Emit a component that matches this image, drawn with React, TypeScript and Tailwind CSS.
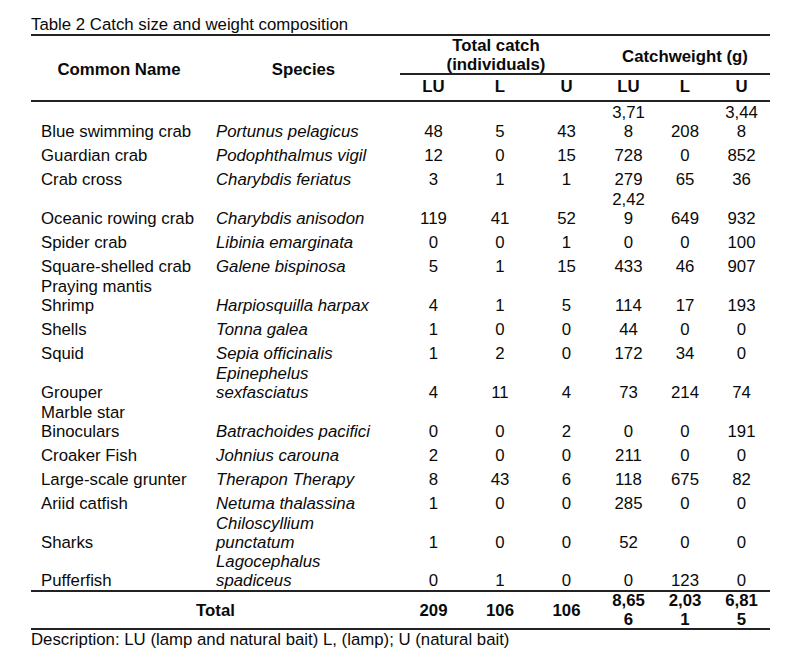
const ROWS: { name: string[]; species: string[]; v: string[][]; h: number }[] = [
  { name: ["Blue swimming crab"], species: ["Portunus pelagicus"], v: [["48"], ["5"], ["43"], ["3,71", "8"], ["208"], ["3,44", "8"]], h: 39 },
  { name: ["Guardian crab"], species: ["Podophthalmus vigil"], v: [["12"], ["0"], ["15"], ["728"], ["0"], ["852"]], h: 24 },
  { name: ["Crab cross"], species: ["Charybdis feriatus"], v: [["3"], ["1"], ["1"], ["279"], ["65"], ["36"]], h: 24 },
  { name: ["Oceanic rowing crab"], species: ["Charybdis anisodon"], v: [["119"], ["41"], ["52"], ["2,42", "9"], ["649"], ["932"]], h: 39 },
  { name: ["Spider crab"], species: ["Libinia emarginata"], v: [["0"], ["0"], ["1"], ["0"], ["0"], ["100"]], h: 24 },
  { name: ["Square-shelled crab"], species: ["Galene bispinosa"], v: [["5"], ["1"], ["15"], ["433"], ["46"], ["907"]], h: 24 },
  { name: ["Praying mantis", "Shrimp"], species: ["Harpiosquilla harpax"], v: [["4"], ["1"], ["5"], ["114"], ["17"], ["193"]], h: 39 },
  { name: ["Shells"], species: ["Tonna galea"], v: [["1"], ["0"], ["0"], ["44"], ["0"], ["0"]], h: 24 },
  { name: ["Squid"], species: ["Sepia officinalis"], v: [["1"], ["2"], ["0"], ["172"], ["34"], ["0"]], h: 24 },
  { name: ["Grouper"], species: ["Epinephelus", "sexfasciatus"], v: [["4"], ["11"], ["4"], ["73"], ["214"], ["74"]], h: 39 },
  { name: ["Marble star", "Binoculars"], species: ["Batrachoides pacifici"], v: [["0"], ["0"], ["2"], ["0"], ["0"], ["191"]], h: 39 },
  { name: ["Croaker Fish"], species: ["Johnius carouna"], v: [["2"], ["0"], ["0"], ["211"], ["0"], ["0"]], h: 24 },
  { name: ["Large-scale grunter"], species: ["Therapon Therapy"], v: [["8"], ["43"], ["6"], ["118"], ["675"], ["82"]], h: 24 },
  { name: ["Ariid catfish"], species: ["Netuma thalassina"], v: [["1"], ["0"], ["0"], ["285"], ["0"], ["0"]], h: 24 },
  { name: ["Sharks"], species: ["Chiloscyllium", "punctatum"], v: [["1"], ["0"], ["0"], ["52"], ["0"], ["0"]], h: 39 },
  { name: ["Pufferfish"], species: ["Lagocephalus", "spadiceus"], v: [["0"], ["1"], ["0"], ["0"], ["123"], ["0"]], h: 38 },
];

const NUM_W = ["w-[67px]", "w-[66px]", "w-[67px]", "w-[57px]", "w-[56px]", "w-[57px]"];

function Lines({ lines }: { lines: string[] }) {
  return (
    <>
      {lines.map((l, i) => (
        <div key={i}>{l}</div>
      ))}
    </>
  );
}

export default function App() {
  return (
    <div className="min-h-screen bg-white pl-[31px] pt-[15px] font-['Liberation_Sans',Arial,sans-serif] text-[16.8px] leading-[19px] text-[#0a0a0a]">
      <div className="h-[19px] whitespace-nowrap">Table 2 Catch size and weight composition</div>

      <div className="w-[739px] border-t-2 border-[#222]">
        {/* header */}
        <div className="flex border-b-2 border-[#222] font-bold">
          <div className="flex h-[64px] w-[176px] items-center justify-center pt-[2px]">Common Name</div>
          <div className="flex h-[64px] w-[193px] items-center justify-center pt-[2px]">Species</div>
          <div className="flex w-[200px] flex-col">
            <div className="flex h-[39px] flex-col items-center justify-center border-b-2 border-[#222] pr-2 leading-[19px]">
              <div>Total catch</div>
              <div>(individuals)</div>
            </div>
            <div className="flex h-[23px] items-center">
              <div className="w-[67px] text-center">LU</div>
              <div className="w-[66px] text-center">L</div>
              <div className="w-[67px] text-center">U</div>
            </div>
          </div>
          <div className="flex w-[170px] flex-col">
            <div className="flex h-[39px] items-center justify-center border-b-2 border-[#222] pt-[3px]">
              Catchweight (g)
            </div>
            <div className="flex h-[23px] items-center">
              <div className="w-[57px] text-center">LU</div>
              <div className="w-[56px] text-center">L</div>
              <div className="w-[57px] text-center">U</div>
            </div>
          </div>
        </div>

        {/* body */}
        <div className="border-b-2 border-[#222]">
          {ROWS.map((r, i) => (
            <div key={i} className="flex items-end" style={{ height: r.h }}>
              <div className="w-[176px] pl-[10px] whitespace-nowrap">
                <Lines lines={r.name} />
              </div>
              <div className="w-[193px] pl-[9px] italic whitespace-nowrap">
                <Lines lines={r.species} />
              </div>
              {r.v.map((c, j) => (
                <div key={j} className={`${NUM_W[j]} text-center`}>
                  <Lines lines={c} />
                </div>
              ))}
            </div>
          ))}
        </div>

        {/* total */}
        <div className="flex h-[38px] items-center border-b-2 border-[#222] font-bold">
          <div className="w-[369px] text-center">Total</div>
          <div className="w-[67px] text-center">209</div>
          <div className="w-[66px] text-center">106</div>
          <div className="w-[67px] text-center">106</div>
          <div className="w-[57px] text-center">
            <div>8,65</div>
            <div>6</div>
          </div>
          <div className="w-[56px] text-center">
            <div>2,03</div>
            <div>1</div>
          </div>
          <div className="w-[57px] text-center">
            <div>6,81</div>
            <div>5</div>
          </div>
        </div>
      </div>

      <div className="whitespace-nowrap">Description: LU (lamp and natural bait) L, (lamp); U (natural bait)</div>
    </div>
  );
}
